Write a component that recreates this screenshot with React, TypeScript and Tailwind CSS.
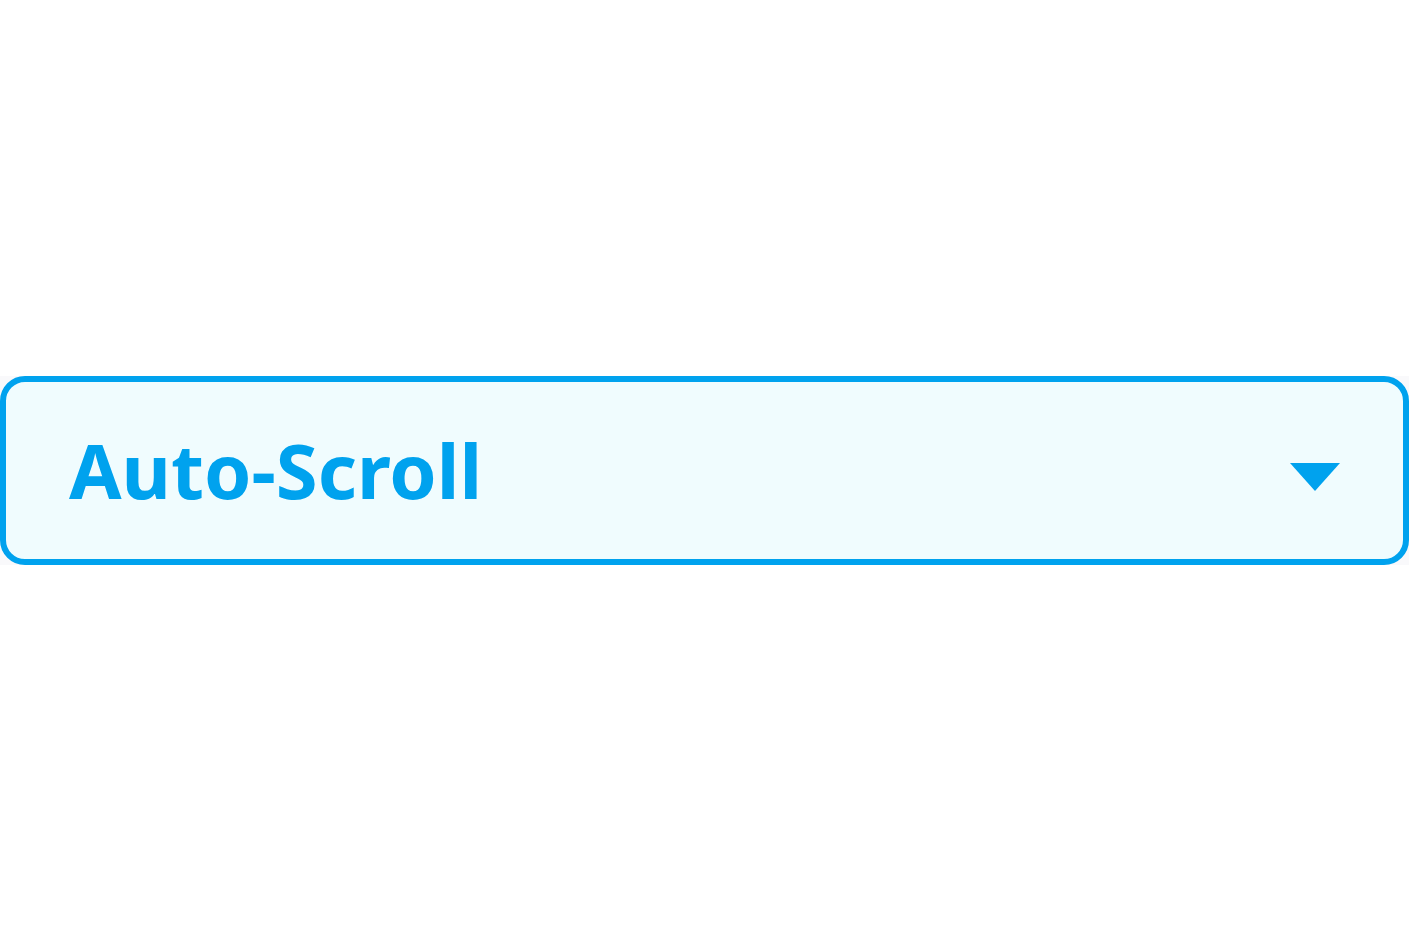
import React from "react";

export default function App() {
  return (
    <main className="flex min-h-screen items-center bg-white font-['Noto_Sans','Open_Sans',sans-serif]">
      <div className="grid w-full items-center bg-[#f9f9fb]">
        <select
          aria-label="Scroll mode"
          defaultValue="auto"
          className="col-start-1 row-start-1 h-[189px] w-full appearance-none rounded-[25px] border-[6px] border-[#00a2ee] bg-[#f0fcfe] px-[63px] pb-0.5 text-[76px] leading-none font-bold text-[#00a2ee]"
        >
          <option value="auto">Auto-Scroll</option>
        </select>
        <svg
          aria-hidden="true"
          viewBox="0 0 50 28"
          className="pointer-events-none col-start-1 row-start-1 mt-3 mr-[69px] h-7 w-[50px] justify-self-end fill-[#00a2ee]"
        >
          <path d="M0 0H50L25 28Z" />
        </svg>
      </div>
    </main>
  );
}
